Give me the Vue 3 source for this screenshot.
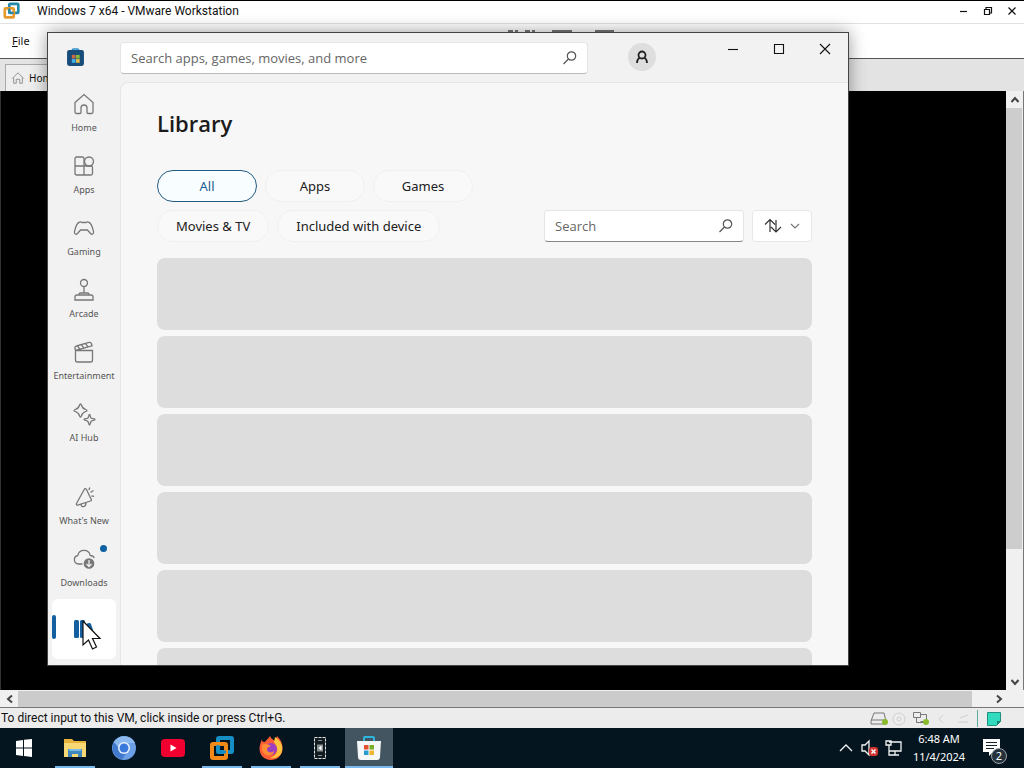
<script setup>
import { ref } from 'vue'

const navTop = [
  { label: 'Home', paths: ['M3 10.5 12 2.5l9 8V20a1.5 1.5 0 0 1-1.500 1.500H16a1 1 0 0 1-1-1V16a3 3 0 0 0-6 0v4.500a1 1 0 0 1-1 1H4.500A1.500 1.500 0 0 1 3 20Z'] },
  { label: 'Apps', paths: ['M12 12V4.500a1.500 1.500 0 0 0-1.500-1.500h-6A1.500 1.500 0 0 0 3 4.500V19a2 2 0 0 0 2 2h14a1.500 1.500 0 0 0 1.500-1.500v-6A1.500 1.500 0 0 0 19 12H3M12 12v9', 'M21.500 7.500a4.500 4.500 0 1 1-9 0 4.500 4.500 0 0 1 9 0Z'] },
  { label: 'Gaming', paths: ['M7 6.500c1.500-1.500 2 0 3 0h4c1 0 1.500-1.500 3 0 2.500.5 3.500 5 4.500 9 .5 2.500-1.500 3.500-3 2L15.500 14h-7L5.500 17.500c-1.500 1.500-3.500.5-3-2 1-4 2-8.500 4.500-9Z'] },
  { label: 'Arcade', paths: ['M15.500 5a3.500 3.500 0 1 1-7 0 3.500 3.500 0 0 1 7 0ZM12 8.500V15M7 17v-.5A1.500 1.500 0 0 1 8.500 15h7a1.500 1.500 0 0 1 1.500 1.500v.5M3 22v-3a2 2 0 0 1 2-2h14a2 2 0 0 1 2 2v3Z'] },
  { label: 'Entertainment', paths: ['M3.500 10.500h17V20a2 2 0 0 1-2 2h-13a2 2 0 0 1-2-2ZM3.500 10.500 3 8.500A2 2 0 0 1 4.500 6L17 2.500a2 2 0 0 1 2.500 1.300l.5 2Z', 'm5.500 6 2.500 3.300M9.500 4.800l2.500 3.300M13.500 3.600 16 7'] },
  { label: 'AI Hub', paths: ['M8.500 2c.7 0 .8.600 1 1.300.7 2.500 1.600 3.400 4.200 4.200.7.200 1.300.4 1.300 1s-.6.8-1.300 1c-2.600.8-3.500 1.700-4.200 4.200-.2.700-.3 1.300-1 1.300s-.8-.6-1-1.300C6.800 11.200 5.900 10.300 3.300 9.500 2.600 9.300 2 9.100 2 8.500s.6-.8 1.300-1C5.900 6.700 6.800 5.800 7.500 3.300c.2-.7.3-1.300 1-1.300Z', 'M17.500 12.500c.9 0 .7 3 1.800 3.700s3.700.4 3.700 1.300-2.600.6-3.700 1.700-.9 3.800-1.800 3.800-.7-2.700-1.800-3.800-3.700-.8-3.700-1.700 2.600-.6 3.700-1.300.9-3.700 1.800-3.700Z'] },
]

const filters = ['All', 'Apps', 'Games', 'Movies & TV', 'Included with device']
const active = ref('All')
const storeQuery = ref('')
const libraryQuery = ref('')
</script>

<template>
  <div class="desktop">
    <header class="titlebar">
      <svg class="vm-logo" viewBox="0 0 20 20" aria-hidden="true">
        <rect x="7" y="2" width="10" height="10" rx="1" fill="none" stroke="#2787a8" stroke-width="3" />
        <rect x="2" y="7" width="10" height="10" rx="1" fill="none" stroke="#e69a2e" stroke-width="3" />
        <path d="M7 7v5h5" fill="none" stroke="#2787a8" stroke-width="2" />
      </svg>
      <span class="title-text">Windows 7 x64 - VMware Workstation</span>
      <div class="vm-controls">
        <button aria-label="Minimize"><svg viewBox="0 0 10 10"><path d="M1 5.500h7" /></svg></button>
        <button aria-label="Restore"><svg viewBox="0 0 10 10"><path d="M1.500 3.500h5v5h-5ZM3 3V1.500h5.500V7H7" /></svg></button>
        <button aria-label="Close"><svg viewBox="0 0 10 10"><path d="m1.500 1.500 7 7m0-7-7 7" /></svg></button>
      </div>
    </header>

    <nav class="menubar">
      <button><u>F</u>ile</button>
      <svg class="tools" viewBox="0 0 110 16" aria-hidden="true">
        <path d="M5 8V5h4m4 3V5h-2m11 3V5h4m4 3V5h-2M49 8V5h18v3ZM92 8V5h17v3Z" fill="none" stroke="#777" stroke-width="2" />
      </svg>
    </nav>

    <div class="tabbar">
      <button class="tab">
        <svg viewBox="0 0 16 16"><path d="M1.500 8.500 8 2l6.500 6.500M3 7.500V14h3V9.500h4V14h3V7.500" /></svg>
        <span>Home</span>
      </button>
    </div>

    <div class="vm-row">
      <div class="vm-screen"></div>
      <div class="vscroll">
        <button aria-label="Scroll up"><svg viewBox="0 0 10 10"><path d="m1.500 7 3.500-4 3.500 4" /></svg></button>
        <div class="vtrack"><div class="vthumb"></div></div>
        <button aria-label="Scroll down"><svg viewBox="0 0 10 10"><path d="m1.500 3 3.500 4 3.500-4" /></svg></button>
      </div>
    </div>
    <div class="hscroll">
      <button aria-label="Scroll left"><svg viewBox="0 0 10 10"><path d="M7 1.500 3 5l4 3.500" /></svg></button>
      <div class="hthumb"></div>
      <button aria-label="Scroll right"><svg viewBox="0 0 10 10"><path d="m3 1.500 4 3.500-4 3.500" /></svg></button>
    </div>

    <footer class="statusbar">
      <span class="status-text">To direct input to this VM, click inside or press Ctrl+G.</span>
      <svg class="devices" viewBox="0 0 140 18" aria-hidden="true">
        <g fill="none" stroke="#777">
          <path d="m4 4-3 8v3h15v-3L14 4ZM1 11h15" />
          <g stroke="#d0d0d0"><circle cx="29" cy="10" r="6" /><circle cx="29" cy="10" r="2" /><path d="m73 6-4 4 4 4M88 13h10M90 9l8-3" /></g>
          <path d="M43.500 3.500h7v5h-7ZM50.500 5.500h6v7h-6M46.500 8.500v5h8" />
        </g>
        <circle cx="15" cy="13" r="3" fill="#8abb2b" /><circle cx="56" cy="13" r="3" fill="#8abb2b" />
        <path d="M107.500 1v17" stroke="#5caaa0" />
        <path d="M117.500 3.500h13v9l-4 4h-9Z" fill="#32dbbd" stroke="#208d7e" /><path d="M131 12h-4v4Z" fill="#168373" />
      </svg>
    </footer>

    <footer class="taskbar">
      <button class="task start" aria-label="Start">
        <svg viewBox="0 0 24 24"><path fill="#fff" d="m4 5 7-1v7.500H4Zm8-1.200L20 3v8.500h-8ZM4 12.500h7V20l-7-1Zm8 0h8V21l-8-.9Z" /></svg>
      </button>
      <button class="task running" aria-label="File Explorer">
        <svg viewBox="0 0 24 24"><path fill="#e6b43d" d="M1 3h8l2 2h12v16H1Z" /><path fill="#f8d875" d="M1 7h22v14H1Z" /><path fill="#3f87bd" d="M5 13h14v8h-4v-3H9v3H5Z" /><path fill="#76bce5" d="M6 13h12v2H6Z" /></svg>
      </button>
      <button class="task" aria-label="Chromium">
        <svg viewBox="0 0 24 24"><circle cx="12" cy="12" r="12" fill="#6ba0e7" /><path d="M2 6A12 12 0 0 0 10 23.500L15 16 7 12Z" fill="#4179cc" /><path d="M2 6a12 12 0 0 1 21 1H12L7 12Z" fill="#8bb8ef" /><circle cx="12" cy="12" r="6" fill="#e9f1ff" /><circle cx="12" cy="12" r="4.500" fill="#3979da" /></svg>
      </button>
      <button class="task" aria-label="YouTube">
        <svg viewBox="0 0 24 24"><rect y="3" width="24" height="18" rx="4" fill="#f2002f" /><path d="m9.500 8.500 6 3.500-6 3.500Z" fill="#fff" /></svg>
      </button>
      <button class="task running" aria-label="VMware Workstation">
        <svg viewBox="0 0 24 24"><rect x="8" y="2" width="14" height="14" rx="1" fill="none" stroke="#168fc7" stroke-width="4" /><rect x="2" y="8" width="14" height="14" rx="1" fill="none" stroke="#f18a19" stroke-width="4" /><path d="M8 9v7h8" fill="none" stroke="#168fc7" stroke-width="3" /></svg>
      </button>
      <button class="task running" aria-label="Firefox">
        <svg viewBox="0 0 24 24"><path fill="#ff5d35" d="M3 3c0 3 1 3 3 3 2-3 4-4 5-6 1 3 4 4 5 5l2-5c4 4 6 8 5.500 14C22.500 20 18 24 12 24 5 24 .5 19 .5 12.500.5 9 2 6 3 3Z" /><path fill="#ffc33c" d="M15 6l1-5c6 4 8 9 7 14-1 5-6 8-12 7 5-2 8-5 7-10-1-3-2-4-3-6Z" /><circle cx="12" cy="13" r="6" fill="#9c3fc1" /><path fill="#ff8d34" d="M3 9c4-2 6-1 9 1-2 1-4 1-4 4 1 3 5 3 7 1 0 5-9 7-12-1Z" /></svg>
      </button>
      <button class="task running" aria-label="Phone">
        <svg viewBox="0 0 24 24"><path d="M6.500 1.500h11v21h-11Z" fill="#111c20" stroke="#e4e4e4" stroke-dasharray="3 1" /><path d="M10 4.500h4M10 19.500h4" stroke="#8a8a8a" /><path d="M9 8.500h6v7H9Z" fill="#8a9294" /><path d="m10.500 12 3-2.500v5Z" fill="#fff" /></svg>
      </button>
      <button class="task running current" aria-label="Microsoft Store">
        <svg viewBox="0 0 24 24"><path d="M7 5V2q0-1 1-1h8q1 0 1 1v3" fill="none" stroke="#2cb6df" stroke-width="2" /><path d="M0 5h24l-1 16q0 3-3 3H4q-3 0-3-3Z" fill="#f5f7f8" /><path d="M7 9h4.500v4.500H7Z" fill="#e35032" /><path d="M12.500 9H17v4.500h-4.500Z" fill="#77ad27" /><path d="M7 14.500h4.500V19H7Z" fill="#2a9bd0" /><path d="M12.500 14.500H17V19h-4.500Z" fill="#efb52c" /></svg>
      </button>
      <div class="tray">
        <svg class="tray-icons" viewBox="0 0 70 24" aria-hidden="true">
          <g fill="none" stroke="#f1f4f5" stroke-width="1.300">
            <path d="m5 15 6-6 6 6M27 9h3l4-4v14l-4-4h-3Z" />
            <path d="M54 6h12v9H54m6 0v4m-4 0h8M51 5h5v4h-5Zm3 4v10h3" />
          </g>
          <rect x="34" y="11" width="9" height="9" rx="3" fill="#d23531" /><path d="m36.500 13.500 4 4m0-4-4 4" stroke="#fff" stroke-width="1.500" />
        </svg>
        <div class="clock"><time>6:48 AM</time><span>11/4/2024</span></div>
        <button class="notify" aria-label="Notifications">
          <svg viewBox="0 0 24 24"><path fill="#fff" d="M1 3h17v13h-7l-4 4v-4H1Z" /><path d="M4 6.500h11M4 9.500h11M4 12.500h8" stroke="#16222b" /></svg>
          <span class="count">2</span>
        </button>
      </div>
    </footer>

    <section class="store">
      <header class="store-header">
        <svg class="store-logo" viewBox="0 0 18 18" aria-hidden="true">
          <path d="M6 4V2q0-1 1-1h4q1 0 1 1v2" fill="none" stroke="#3191c8" stroke-width="1.500" /><rect x="1" y="2" width="16" height="15" rx="2" fill="#174c7b" />
          <path d="M5.500 6.500H9V10H5.500Z" fill="#c96a4a" /><path d="M9.500 6.500H13V10H9.500Z" fill="#89bc35" /><path d="M5.500 10.500H9V14H5.500Z" fill="#42b3e8" /><path d="M9.500 10.500H13V14H9.500Z" fill="#e3bb4c" />
        </svg>
        <label class="field header-search">
          <input v-model="storeQuery" type="text" aria-label="Search apps, games, movies, and more" placeholder="Search apps, games, movies, and more" />
          <svg viewBox="0 0 16 16"><circle cx="9.500" cy="6" r="4.200" /><path d="m6.500 9-5 5" /></svg>
        </label>
        <button class="avatar" aria-label="Account"><svg viewBox="0 0 16 16"><circle cx="8" cy="6" r="3.500" /><path d="M3 14c0-3 1.500-4.800 3-5.500m4 0c1.500.7 3 2.500 3 5.500" /></svg></button>
        <div class="window-controls">
          <button aria-label="Minimize Store"><svg viewBox="0 0 12 12"><path d="M1 6.500h10" /></svg></button>
          <button aria-label="Maximize Store"><svg viewBox="0 0 12 12"><path d="M1.500 1.500h9v9h-9Z" /></svg></button>
          <button aria-label="Close Store"><svg viewBox="0 0 12 12"><path d="m1 1 10 10m0-10L1 11" /></svg></button>
        </div>
      </header>

      <div class="store-body">
        <nav class="rail">
          <button v-for="item in navTop" :key="item.label" class="rail-item">
            <svg viewBox="0 0 24 24"><path v-for="d in item.paths" :key="d" :d="d" /></svg>
            <span>{{ item.label }}</span>
          </button>
          <button class="rail-item first-bottom">
            <svg viewBox="0 0 24 24"><path d="M12.500 4 4.500 18.500c-.5 1 .3 1.700 1.200 1.500L18.500 16c1-.3 1.200-1 .6-1.800L14.500 4.500c-.5-.9-1.500-1.200-2-.5ZM9 19c0 4 5 3.500 5-1.300M17 5l.7-2.500M18.500 7.500l3-2M19.500 11l2.500.3" /></svg>
            <span>What's New</span>
          </button>
          <button class="rail-item">
            <svg viewBox="0 0 24 24"><path d="M11 17H6.500A4.300 4.300 0 0 1 5.800 8.500a6.300 6.300 0 0 1 12.400 0c2 .1 3.500 1 4 2.500" /><circle cx="17" cy="16.500" r="6" class="solid" /><path class="arrow" d="M17 13v6.500m-2.500-2.500 2.500 2.500 2.500-2.500" /></svg>
            <span>Downloads</span>
            <i class="dot"></i>
          </button>
          <button class="rail-item selected" aria-label="Library">
            <svg viewBox="0 0 24 24"><rect x="2" y="3" width="5" height="18" rx="1.500" /><rect x="8" y="3" width="5" height="18" rx="1.500" /><path d="m14 7 3-1q1.500-.3 2 1l4 12q.3 1.300-1 2l-2 .5q-1.500.3-2-1L13.500 9q-.4-1.500.5-2Z" /></svg>
          </button>
        </nav>

        <main class="library">
          <h1>Library</h1>
          <div class="toolbar">
            <div class="chips">
              <button v-for="f in filters" :key="f" class="chip" :class="{ active: f === active }" @click="active = f">{{ f }}</button>
            </div>
            <label class="field library-search">
              <input v-model="libraryQuery" type="text" aria-label="Search library" placeholder="Search" />
              <svg viewBox="0 0 16 16"><circle cx="9.500" cy="6" r="4.200" /><path d="m6.500 9-5 5" /></svg>
            </label>
            <button class="sort" aria-label="Sort">
              <svg class="arrows" viewBox="0 0 18 16"><path d="M6 14V2M1 6.500l5-5 5 5M12 2v12M7 9l5 5 5-5" /></svg>
              <svg class="chevron" viewBox="0 0 10 10"><path d="m1 3 4 4 4-4" /></svg>
            </button>
          </div>
          <div class="skeletons"><div v-for="n in 6" :key="n" class="skeleton"></div></div>
        </main>
      </div>
    </section>

    <svg class="cursor" viewBox="0 0 20 30" aria-hidden="true"><path d="M1 1v24l5.500-5 4 9 4-2-4-8.500H18Z" fill="#fff" stroke="#111" stroke-width="1.200" /></svg>
  </div>
</template>

<style>
body { margin: 0; }
</style>

<style scoped>
* { box-sizing: border-box; }
button { border: 0; padding: 0; background: none; font: inherit; color: inherit; }
svg { flex: none; }
.desktop { position: relative; display: flex; flex-direction: column; height: 100vh; min-height: 500px; overflow: hidden; background: #000; font-family: "Noto Sans", "Open Sans", sans-serif; font-size: 11px; color: #111; }
.titlebar { display: flex; align-items: center; flex: none; height: 24px; padding: 0 7px 2px 3px; border-top: 1px solid #000; border-bottom: 1px solid #e2e2e2; background: #fff; }
.vm-logo { width: 18px; height: 18px; margin-right: 16px; }
.title-text, .status-text { font-family: Roboto, "Open Sans", sans-serif; font-size: 12px; }
.title-text { flex: 1; white-space: nowrap; }
.vm-controls { display: flex; gap: 14px; }
.vm-controls button { display: flex; }
.vm-controls svg { width: 10px; height: 10px; fill: none; stroke: #111; stroke-width: 1.2; }
.menubar { display: flex; align-items: center; flex: none; height: 34px; padding: 0 0 2px 12px; background: #fff; }
.tools { width: 110px; height: 16px; margin: 0 0 12px 474px; }
.tabbar { display: flex; align-items: flex-end; flex: none; height: 33px; padding-left: 5px; border-top: 1px solid #555; background: #e3e3e3; }
.tab { display: flex; align-items: center; gap: 4px; height: 27px; padding: 0 5px; border: 1px solid #aaa; border-bottom: 0; background: #eee; font-size: 10px; }
.tab svg { width: 14px; height: 16px; fill: none; stroke: #888; }
.vm-row { display: flex; flex: 1; min-height: 0; border-left: 1px solid #333; }
.vm-screen { flex: 1; background: #000; }
.vscroll { display: flex; flex-direction: column; width: 18px; border-right: 1px solid #777; background: #f0f0f0; }
.vscroll button, .hscroll button { display: grid; place-items: center; flex: none; width: 17px; height: 17px; }
.vscroll svg, .hscroll svg { width: 10px; height: 10px; fill: none; stroke: #444; stroke-width: 2; }
.vtrack { flex: 1; padding-right: 1px; }
.vthumb { height: 78%; background: #cdcdcd; }
.hscroll { display: flex; align-items: center; flex: none; height: 18px; padding: 0 17px 0 1px; border-bottom: 1px solid #777; background: #f0f0f0; }
.hthumb { flex: 1; height: 16px; margin-right: 18px; background: #cbcbcb; }
.statusbar { display: flex; align-items: center; justify-content: space-between; flex: none; height: 20px; padding: 0 14px 0 1px; background: #ececec; }
.devices { width: 140px; height: 18px; }
.taskbar { display: flex; flex: none; height: 40px; background: #04151f; color: #fff; }
.task { display: grid; place-items: center; width: 48px; margin-right: 1px; }
.start { width: 50px; padding-right: 2px; }
.task svg { width: 24px; height: 24px; }
.running { position: relative; }
.running::after { position: absolute; right: 4px; bottom: 0; left: 4px; height: 2px; background: #79b8ea; content: ""; }
.current { background: #435560; }
.current::after { right: 0; left: 0; }
.tray { display: flex; align-items: center; margin-left: auto; padding-right: 17px; }
.tray-icons { width: 70px; height: 24px; }
.clock { display: flex; flex-direction: column; align-items: center; width: 68px; line-height: 18px; }
.notify { position: relative; width: 26px; height: 24px; margin-left: 8px; }
.notify svg { width: 24px; height: 24px; }
.count { position: absolute; right: 0; bottom: -4px; width: 16px; height: 16px; border: 1px solid #9aa4aa; border-radius: 50%; background: #25323b; font-size: 11px; line-height: 14px; }

.store { position: absolute; top: 32px; right: 175px; bottom: 102px; left: 47px; display: flex; flex-direction: column; overflow: hidden; border: 1px solid #444; background: #f2f2f2; box-shadow: 0 0 16px #0006; }
.store-header { display: flex; flex: none; height: 49px; padding-left: 18px; }
.store-logo { width: 19px; height: 19px; margin: 15px 35px 0 0; }
.field { display: flex; align-items: center; height: 32px; border: 1px solid #e5e5e5; border-bottom-color: #bbb; border-radius: 4px; background: #fff; font-family: "Open Sans", "Noto Sans", sans-serif; font-size: 13px; }
.field input { flex: 1; min-width: 0; height: 100%; padding: 0 10px; border: 0; outline: 0; background: none; font: inherit; color: #222; }
.field input::placeholder { color: #666; opacity: 1; }
.field svg { width: 16px; height: 16px; margin-right: 9px; fill: none; stroke: #555; stroke-width: 1.2; }
.header-search { flex: 1; margin: 9px 40px 0 0; }
.avatar { display: grid; place-items: center; width: 28px; height: 28px; margin: 10px 54px 0 0; border-radius: 50%; background: #dedede; }
.avatar svg { width: 16px; height: 16px; fill: none; stroke: #222; stroke-width: 1.8; }
.window-controls { display: flex; }
.window-controls button { display: grid; place-items: center; width: 46px; height: 32px; }
.window-controls svg { width: 12px; height: 12px; fill: none; stroke: #111; stroke-width: 1.1; }
.store-body { display: flex; flex: 1; min-height: 0; }
.rail { display: flex; flex-direction: column; gap: 2px; flex: none; width: 72px; padding: 0 4px 6px; }
.rail-item { position: relative; display: flex; flex-direction: column; align-items: center; flex: none; height: 60px; padding-top: 10px; border-radius: 6px; color: #555; font-size: 9px; line-height: 12px; white-space: nowrap; }
.rail-item svg { width: 24px; height: 24px; margin-bottom: 6px; fill: none; stroke: #777; stroke-width: 1.3; }
.rail-item .solid { fill: #777; stroke: #f2f2f2; }
.rail-item .arrow { stroke: #eee; }
.first-bottom { margin-top: auto; }
.dot { position: absolute; top: 8px; right: 9px; width: 7px; height: 7px; border-radius: 50%; background: #0f61a5; }
.selected { justify-content: center; padding: 0; background: #fff; }
.selected::before { position: absolute; top: 16px; left: 0; width: 4px; height: 24px; border-radius: 2px; background: #145f9f; content: ""; }
.rail-item.selected svg { margin: 0; fill: #145f9f; stroke: none; }
.library { flex: 1; min-width: 0; overflow: hidden; padding: 24px 36px 0; border-top: 1px solid #e6e6e6; border-left: 1px solid #e6e6e6; border-top-left-radius: 8px; background: #f7f7f7; }
h1 { margin: 0 0 31px; font-family: "Open Sans", "Noto Sans", sans-serif; font-size: 22px; font-weight: 600; line-height: 32px; color: #1b1b1b; }
.toolbar { display: flex; align-items: flex-end; gap: 8px; }
.chips { display: flex; flex: 1; flex-wrap: wrap; gap: 8px; }
.chip { min-width: 100px; height: 32px; padding: 0 18px; border: 1px solid #f0f0f0; border-radius: 16px; background: #f9f9f9; font-size: 13px; color: #202020; }
.chip.active { border-color: #245b80; background: #f8fdff; color: #1d5f8c; }
.library-search { width: 200px; border-bottom-color: #888; }
.sort { display: flex; align-items: center; justify-content: center; gap: 8px; width: 60px; height: 32px; border: 1px solid #e7e7e7; border-radius: 4px; background: #fff; }
.sort svg { fill: none; stroke: #333; stroke-width: 1.2; }
.arrows { width: 18px; height: 16px; }
.sort .chevron { width: 10px; height: 10px; stroke: #777; }
.skeletons { display: flex; flex-direction: column; gap: 6px; margin-top: 16px; }
.skeleton { height: 72px; border-radius: 8px; background: #ddd; }
.cursor { position: absolute; top: 620px; left: 82px; width: 20px; height: 30px; }
</style>
